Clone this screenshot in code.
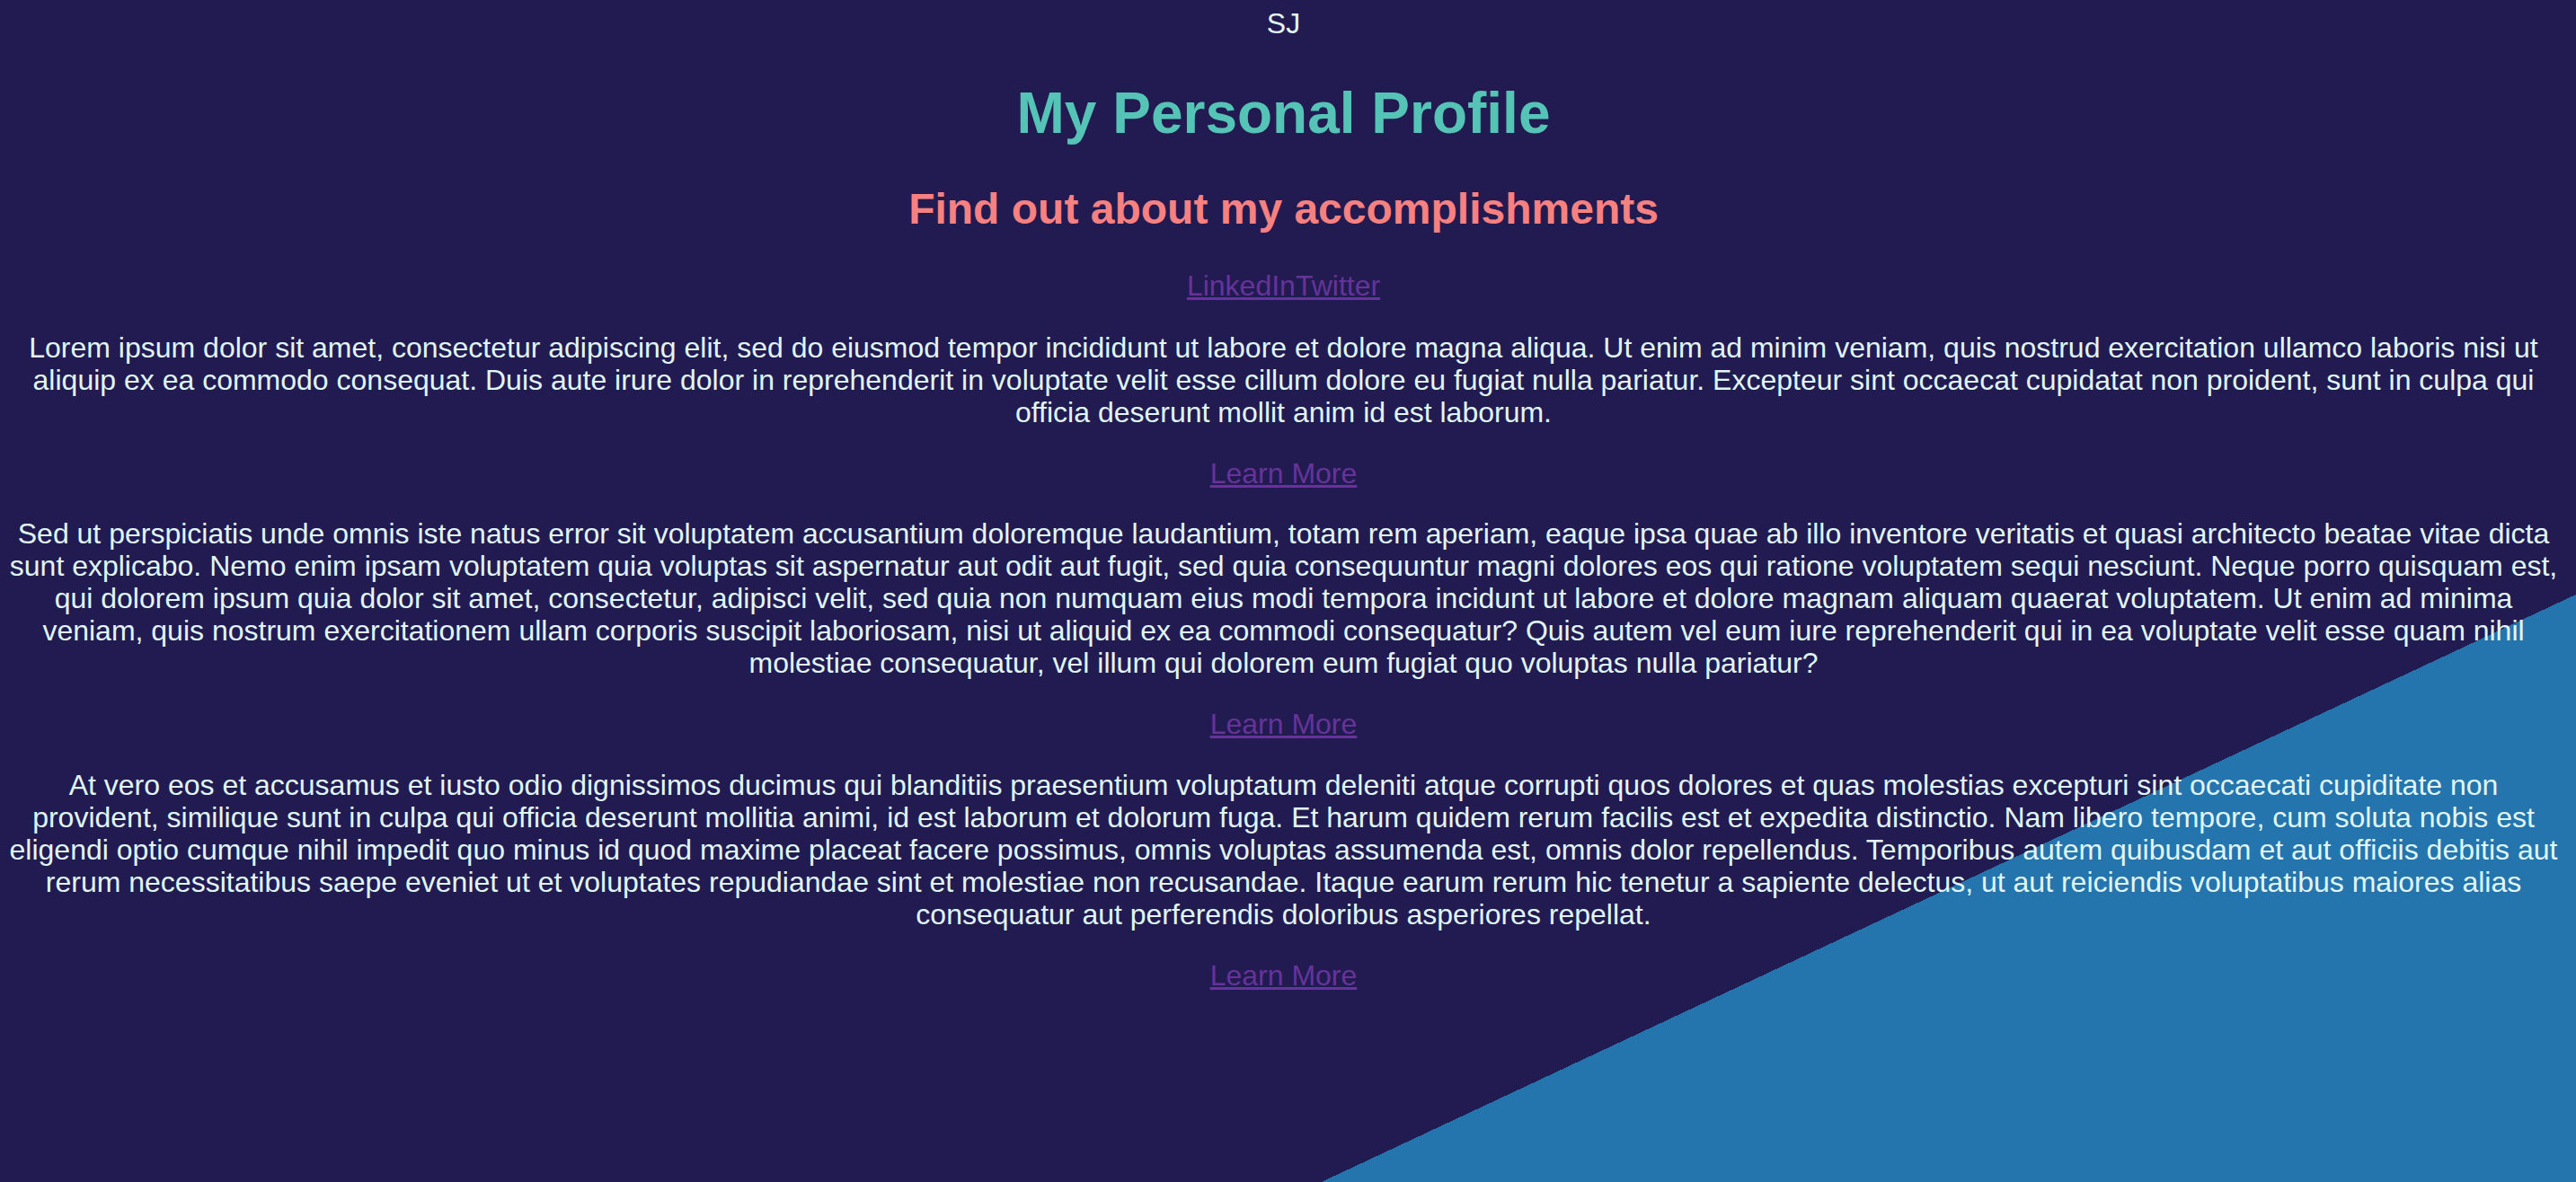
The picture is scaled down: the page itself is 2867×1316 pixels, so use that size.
import React from "react";

const P1 =
  "Lorem ipsum dolor sit amet, consectetur adipiscing elit, sed do eiusmod tempor incididunt ut labore et dolore magna aliqua. Ut enim ad minim veniam, quis nostrud exercitation ullamco laboris nisi ut aliquip ex ea commodo consequat. Duis aute irure dolor in reprehenderit in voluptate velit esse cillum dolore eu fugiat nulla pariatur. Excepteur sint occaecat cupidatat non proident, sunt in culpa qui officia deserunt mollit anim id est laborum.";

const P2 =
  "Sed ut perspiciatis unde omnis iste natus error sit voluptatem accusantium doloremque laudantium, totam rem aperiam, eaque ipsa quae ab illo inventore veritatis et quasi architecto beatae vitae dicta sunt explicabo. Nemo enim ipsam voluptatem quia voluptas sit aspernatur aut odit aut fugit, sed quia consequuntur magni dolores eos qui ratione voluptatem sequi nesciunt. Neque porro quisquam est, qui dolorem ipsum quia dolor sit amet, consectetur, adipisci velit, sed quia non numquam eius modi tempora incidunt ut labore et dolore magnam aliquam quaerat voluptatem. Ut enim ad minima veniam, quis nostrum exercitationem ullam corporis suscipit laboriosam, nisi ut aliquid ex ea commodi consequatur? Quis autem vel eum iure reprehenderit qui in ea voluptate velit esse quam nihil molestiae consequatur, vel illum qui dolorem eum fugiat quo voluptas nulla pariatur?";

const P3 =
  "At vero eos et accusamus et iusto odio dignissimos ducimus qui blanditiis praesentium voluptatum deleniti atque corrupti quos dolores et quas molestias excepturi sint occaecati cupiditate non provident, similique sunt in culpa qui officia deserunt mollitia animi, id est laborum et dolorum fuga. Et harum quidem rerum facilis est et expedita distinctio. Nam libero tempore, cum soluta nobis est eligendi optio cumque nihil impedit quo minus id quod maxime placeat facere possimus, omnis voluptas assumenda est, omnis dolor repellendus. Temporibus autem quibusdam et aut officiis debitis aut rerum necessitatibus saepe eveniet ut et voluptates repudiandae sint et molestiae non recusandae. Itaque earum rerum hic tenetur a sapiente delectus, ut aut reiciendis voluptatibus maiores alias consequatur aut perferendis doloribus asperiores repellat.";

function LearnMore({ className }: { className: string }) {
  return (
    <div className={className}>
      <a href="#" className="text-[#663399] underline">
        Learn More
      </a>
    </div>
  );
}

export default function App() {
  return (
    <div className="min-h-screen bg-[linear-gradient(154.9deg,#221b51_75.4%,#2475ad_75.4%)] pl-[8px] pr-[18px] pt-[8px] text-center font-['Liberation_Sans',Arial,sans-serif] text-[32px] leading-[36px] text-[#e0f5f5]">
      <div className="h-[36px]">SJ</div>
      <h1 className="mt-[45px] text-[64px] leading-[74px] font-bold text-[#55c3b5]">
        My Personal Profile
      </h1>
      <h2 className="mt-[42px] text-[48px] leading-[55px] font-bold text-[#f78080]">
        Find out about my accomplishments
      </h2>
      <div className="mt-[40px]">
        <a href="#" className="text-[#663399] underline">
          LinkedIn
        </a>
        <a href="#" className="text-[#663399] underline">
          Twitter
        </a>
      </div>
      <p className="mt-[33px]">{P1}</p>
      <LearnMore className="mt-[32px]" />
      <p className="mt-[31px]">{P2}</p>
      <LearnMore className="mt-[32px]" />
      <p className="mt-[32px]">{P3}</p>
      <LearnMore className="mt-[32px]" />
    </div>
  );
}
